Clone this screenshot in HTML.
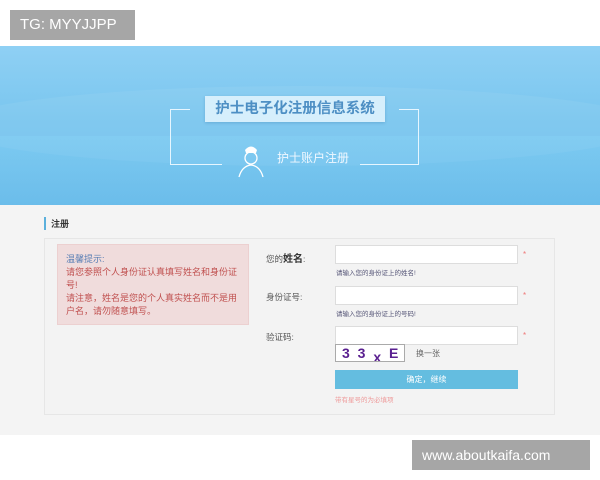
<!DOCTYPE html>
<html><head><meta charset="utf-8"><style>
*{margin:0;padding:0;box-sizing:border-box}
body{width:600px;height:480px;position:relative;background:#fff;font-family:"Liberation Sans","Noto Sans CJK SC",sans-serif;overflow:hidden}
.a{position:absolute}
.badge{background:#a6a6a6;color:#fff;font-size:15px;line-height:30px;padding-left:10px}
.banner{left:0;top:46px;width:600px;height:159px;background:linear-gradient(180deg,#8fd0f4 0%,#7ac6ef 45%,#6cbcea 100%);overflow:hidden}
.gray{left:0;top:205px;width:600px;height:230px;background:#f4f4f4}
.panel{left:44px;top:238px;width:511px;height:177px;border:1px solid #e6e6e6;background:#f3f3f3}
.pink{left:57px;top:244px;width:192px;height:81px;background:#f0dcdc;border:1px solid #ecd0d0;font-size:9px;line-height:13px;color:#c0504f;padding:8px 8px}
.lbl{font-size:8.5px;color:#555}
.inp{left:335px;width:183px;height:19px;background:#fff;border:1px solid #ddd}
.hint{font-size:6.5px;color:#557}
.star{color:#e77;font-size:8px}
</style></head><body>
<div class="a badge" style="left:10px;top:10px;width:125px;height:30px">TG: MYYJJPP</div>
<div class="a banner">
<div class="a" style="left:-50px;top:40px;width:700px;height:80px;border-radius:50%;background:rgba(255,255,255,0.06)"></div>
<div class="a" style="left:0;top:90px;width:600px;height:70px;background:linear-gradient(180deg,rgba(140,220,250,0.25),rgba(100,190,235,0.15))"></div>
<div class="a" style="left:170px;top:63px;width:20px;height:1px;background:#e6f6ff"></div>
<div class="a" style="left:170px;top:63px;width:1px;height:56px;background:#e6f6ff"></div>
<div class="a" style="left:170px;top:118px;width:52px;height:1px;background:#e6f6ff"></div>
<div class="a" style="left:399px;top:63px;width:20px;height:1px;background:#e6f6ff"></div>
<div class="a" style="left:418px;top:63px;width:1px;height:56px;background:#e6f6ff"></div>
<div class="a" style="left:360px;top:118px;width:59px;height:1px;background:#e6f6ff"></div>
<div class="a" style="left:205px;top:50px;width:180px;height:26px;background:#d6effc;box-shadow:0 1px 3px rgba(0,60,120,.2);color:#4d8fc4;font-weight:bold;font-size:14.5px;line-height:26px;text-align:center">护士电子化注册信息系统</div>
<svg class="a" style="left:236px;top:96px" width="30" height="36" viewBox="0 0 30 36"><path d="M9 8 Q15 1 21 8 L20 11 L10 11Z" fill="#fff"/><circle cx="15" cy="16" r="6" fill="none" stroke="#fff" stroke-width="1.3"/><path d="M3 35 Q6 24 15 23 Q24 24 27 35" fill="none" stroke="#fff" stroke-width="1.3"/></svg>
<div class="a" style="left:277px;top:103px;color:#f0f8ff;font-size:12px">护士账户注册</div>
</div>
<div class="a gray"></div>
<div class="a" style="left:44px;top:217px;width:2px;height:13px;background:#5bb0dc"></div>
<div class="a" style="left:51px;top:217px;font-size:9px;font-weight:bold;color:#333">注册</div>
<div class="a panel"></div>
<div class="a pink"><span style="color:#5a7fb5">温馨提示:</span><br>请您参照个人身份证认真填写姓名和身份证号!<br>请注意，姓名是您的个人真实姓名而不是用户名，请勿随意填写。</div>
<div class="a lbl" style="left:266px;top:250px">您的<b style="font-size:10px;color:#333">姓名</b>:</div>
<div class="a inp" style="top:245px"></div><div class="a star" style="left:523px;top:250px">*</div>
<div class="a hint" style="left:336px;top:267px">请输入您的身份证上的姓名!</div>
<div class="a lbl" style="left:266px;top:291px">身份证号:</div>
<div class="a inp" style="top:286px"></div><div class="a star" style="left:523px;top:291px">*</div>
<div class="a hint" style="left:336px;top:308px">请输入您的身份证上的号码!</div>
<div class="a lbl" style="left:266px;top:331px">验证码:</div>
<div class="a inp" style="top:326px"></div><div class="a star" style="left:523px;top:331px">*</div>
<div class="a" style="left:335px;top:344px;width:70px;height:18px;background:#fff;border:1px solid #aaa;overflow:hidden;color:#5a2090;font-size:14px;font-weight:bold;line-height:16px;padding-left:6px;letter-spacing:2px">3 3 <span style="position:relative;top:4px">x</span> E</div>
<div class="a" style="left:416px;top:348px;font-size:8px;color:#666">换一张</div>
<div class="a" style="left:335px;top:370px;width:183px;height:19px;background:#64bde0;color:#fff;font-size:8px;text-align:center;line-height:19px">确定，继续</div>
<div class="a" style="left:335px;top:394px;font-size:6.5px;color:#e99">带有星号的为必填项</div>
<div class="a badge" style="left:412px;top:440px;width:178px;height:30px;font-size:14px;padding-left:10px">www.aboutkaifa.com</div>
</body></html>
